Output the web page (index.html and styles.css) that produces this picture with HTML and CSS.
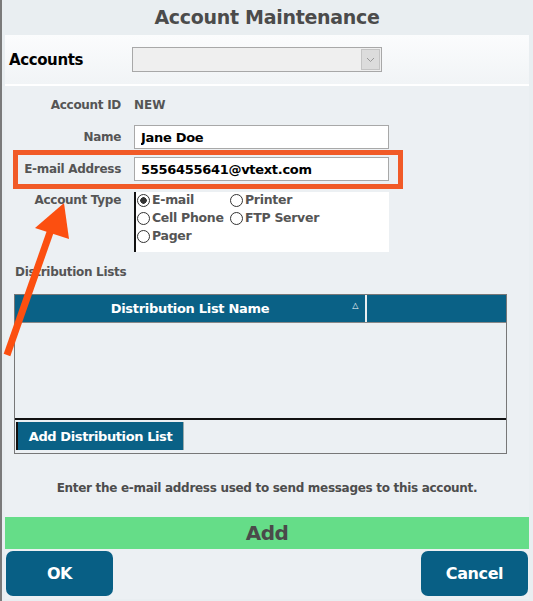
FILE: index.html
```html
<!DOCTYPE html>
<html lang="en">
<head>
  <meta charset="UTF-8">
  <title>Account Maintenance</title>
  <link rel="stylesheet" href="styles.css">
</head>
<body>
  <div class="page">
    <h1 class="title">Account Maintenance</h1>

    <div class="accounts-bar">
      <span class="accounts-label">Accounts</span>
      <div class="select">
        <span class="select-arrow">
          <svg width="9" height="6" viewBox="0 0 9 6"><path d="M1 1 L4.5 4.5 L8 1" fill="none" stroke="#999" stroke-width="1"/></svg>
        </span>
      </div>
    </div>

    <div class="main">
      <div class="form">
        <div class="row row-id">
          <label class="label">Account ID</label>
          <span class="value">NEW</span>
        </div>
        <div class="row row-name">
          <label class="label" for="name">Name</label>
          <input class="field" id="name" type="text" value="Jane Doe">
        </div>
        <div class="row row-email">
          <label class="label" for="email">E-mail Address</label>
          <input class="field" id="email" type="text" value="5556455641@vtext.com">
        </div>
        <div class="row row-type">
          <label class="label">Account Type</label>
          <div class="type-box">
            <span class="radio checked">E-mail</span>
            <span class="radio">Printer</span>
            <span class="radio">Cell Phone</span>
            <span class="radio">FTP Server</span>
            <span class="radio">Pager</span>
          </div>
        </div>
      </div>

      <div class="section-label">Distribution Lists</div>

      <div class="dist-table">
        <div class="dist-head">
          <div class="col-name">Distribution List Name <span class="sort">&#9651;</span></div>
          <div class="col-extra"></div>
        </div>
        <div class="dist-body"></div>
        <div class="dist-foot">
          <button class="add-list">Add Distribution List</button>
        </div>
      </div>

      <p class="hint">Enter the e-mail address used to send messages to this account.</p>

      <div class="add-bar">Add</div>

      <div class="actions">
        <button class="btn">OK</button>
        <button class="btn">Cancel</button>
      </div>
    </div>

    <!-- annotation overlay -->
    <div class="highlight"></div>
    <svg class="arrow" width="80" height="170" viewBox="0 0 80 170">
      <line x1="5" y1="158" x2="52" y2="24" stroke="#fc4f10" stroke-width="7"/>
      <polygon points="62,6 33,31 67,42" fill="#fc4f10"/>
    </svg>
  </div>
</body>
</html>
```

FILE: styles.css
```css
*{
  margin: 0;
  padding: 0;
  box-sizing: border-box;
}
body{
  font-family: "DejaVu Sans", Verdana, sans-serif;
  background-color: #e9eef1;
  width: 533px;
  height: 601px;
  overflow: hidden;
}
.page{
  position: relative;
  height: 601px;
  border-left: 2px solid #7a7a7a;
  padding: 0 4px 0 3px;
}
.title{
  height: 35px;
  line-height: 35px;
  text-align: center;
  font-size: 19px;
  font-weight: bold;
  color: #4b4b4b;
  letter-spacing: -0.3px;
}
.accounts-bar{
  height: 51px;
  display: flex;
  align-items: center;
  background: linear-gradient(to bottom, #fbfcfd, #f1f4f6);
  border-bottom: 2px solid #ffffff;
  padding-left: 4px;
}
.accounts-label{
  width: 123px;
  font-size: 15px;
  font-weight: bold;
  color: #000;
  letter-spacing: -0.4px;
}
.select{
  width: 250px;
  height: 25px;
  border: 1px solid #a8a8a8;
  background-color: #efefef;
  display: flex;
  justify-content: flex-end;
}
.select-arrow{
  width: 19px;
  height: 21px;
  margin: 1px;
  background-color: #dcdcdc;
  border: 1px solid #c4c4c4;
  display: flex;
  align-items: center;
  justify-content: center;
}
.main{
  background-color: #ecf0f3;
  height: 513px;
  padding-top: 7px;
}
.form{
  display: flex;
  flex-direction: column;
}
.row{
  display: flex;
  align-items: center;
  gap: 13px;
}
.label{
  width: 116px;
  text-align: right;
  font-size: 12px;
  font-weight: bold;
  color: #555;
  letter-spacing: -0.3px;
}
.value{
  font-size: 12px;
  font-weight: bold;
  color: #555;
}
.row-id{
  height: 24px;
}
.row-name{
  margin-top: 8px;
}
.row-email{
  margin-top: 8px;
}
.field{
  width: 255px;
  height: 24px;
  border: 1px solid #a8a8a8;
  background-color: #fff;
  padding-left: 6px;
  font-family: "DejaVu Sans", Verdana, sans-serif;
  font-size: 13px;
  font-weight: bold;
  color: #000;
  letter-spacing: -0.3px;
}
.row-type{
  margin-top: 11px;
  align-items: flex-start;
}
.row-type .label{
  margin-top: 1px;
}
.type-box{
  width: 255px;
  height: 60px;
  background-color: #fff;
  border-left: 2px solid #111;
  padding: 0 0 0 1px;
  display: grid;
  grid-template-columns: 93px 1fr;
  grid-auto-rows: 18px;
  align-content: start;
}
.radio{
  display: flex;
  align-items: flex-start;
  height: 15px;
  line-height: 15px;
  font-size: 12.5px;
  font-weight: bold;
  color: #555;
  letter-spacing: -0.3px;
}
.radio::before{
  content: "";
  width: 11px;
  height: 11px;
  margin-top: 2px;
  border: 1px solid #333;
  border-radius: 50%;
  margin-right: 2px;
  background-color: #fff;
}
.radio.checked::before{
  background: radial-gradient(circle, #333 0 3px, #fff 3.5px);
}
.section-label{
  margin: 13px 0 0 10px;
  height: 15px;
  font-size: 12px;
  font-weight: bold;
  color: #555;
  letter-spacing: -0.3px;
}
.dist-table{
  margin: 14px 0 0 9px;
  width: 493px;
  height: 160px;
  border: 1px solid #777;
  display: flex;
  flex-direction: column;
}
.dist-head{
  height: 28px;
  display: flex;
  background-color: #0a6186;
  border-bottom: 1px solid #888;
  color: #fff;
  font-size: 13px;
  font-weight: bold;
  letter-spacing: -0.3px;
}
.col-name{
  width: 352px;
  border-right: 2px solid #e9eef1;
  display: flex;
  align-items: center;
  justify-content: center;
  position: relative;
}
.sort{
  position: absolute;
  right: 7px;
  top: 6px;
  font-size: 8px;
}
.col-extra{
  flex: 1;
}
.dist-body{
  flex: 1;
}
.dist-foot{
  height: 35px;
  border-top: 2px solid #111;
  padding: 2px 0 0 1px;
}
.add-list{
  height: 28px;
  width: 168px;
  background-color: #0a6186;
  border: none;
  border-left: 2px solid #111;
  border-right: 1px solid #9aa;
  color: #fff;
  font-family: "DejaVu Sans", Verdana, sans-serif;
  font-size: 13px;
  font-weight: bold;
  letter-spacing: -0.4px;
}
.hint{
  margin-top: 27px;
  height: 16px;
  text-align: center;
  font-size: 12px;
  font-weight: bold;
  color: #4d4d4d;
  letter-spacing: -0.3px;
}
.add-bar{
  margin-top: 20px;
  height: 32px;
  line-height: 32px;
  background-color: #65dd88;
  text-align: center;
  font-size: 20px;
  font-weight: bold;
  color: #4a4a4a;
  letter-spacing: -0.5px;
}
.actions{
  margin-top: 2px;
  display: flex;
  justify-content: space-between;
  padding: 0 1px;
}
.btn{
  width: 107px;
  height: 45px;
  background-color: #085f85;
  border: none;
  border-radius: 7px;
  color: #fff;
  font-family: "DejaVu Sans", Verdana, sans-serif;
  font-size: 16px;
  font-weight: bold;
  letter-spacing: -0.4px;
}
.highlight{
  position: absolute;
  left: 11px;
  top: 150px;
  width: 390px;
  height: 39px;
  border: 5px solid #f15a27;
}
.arrow{
  position: absolute;
  left: 0px;
  top: 197px;
}
```
